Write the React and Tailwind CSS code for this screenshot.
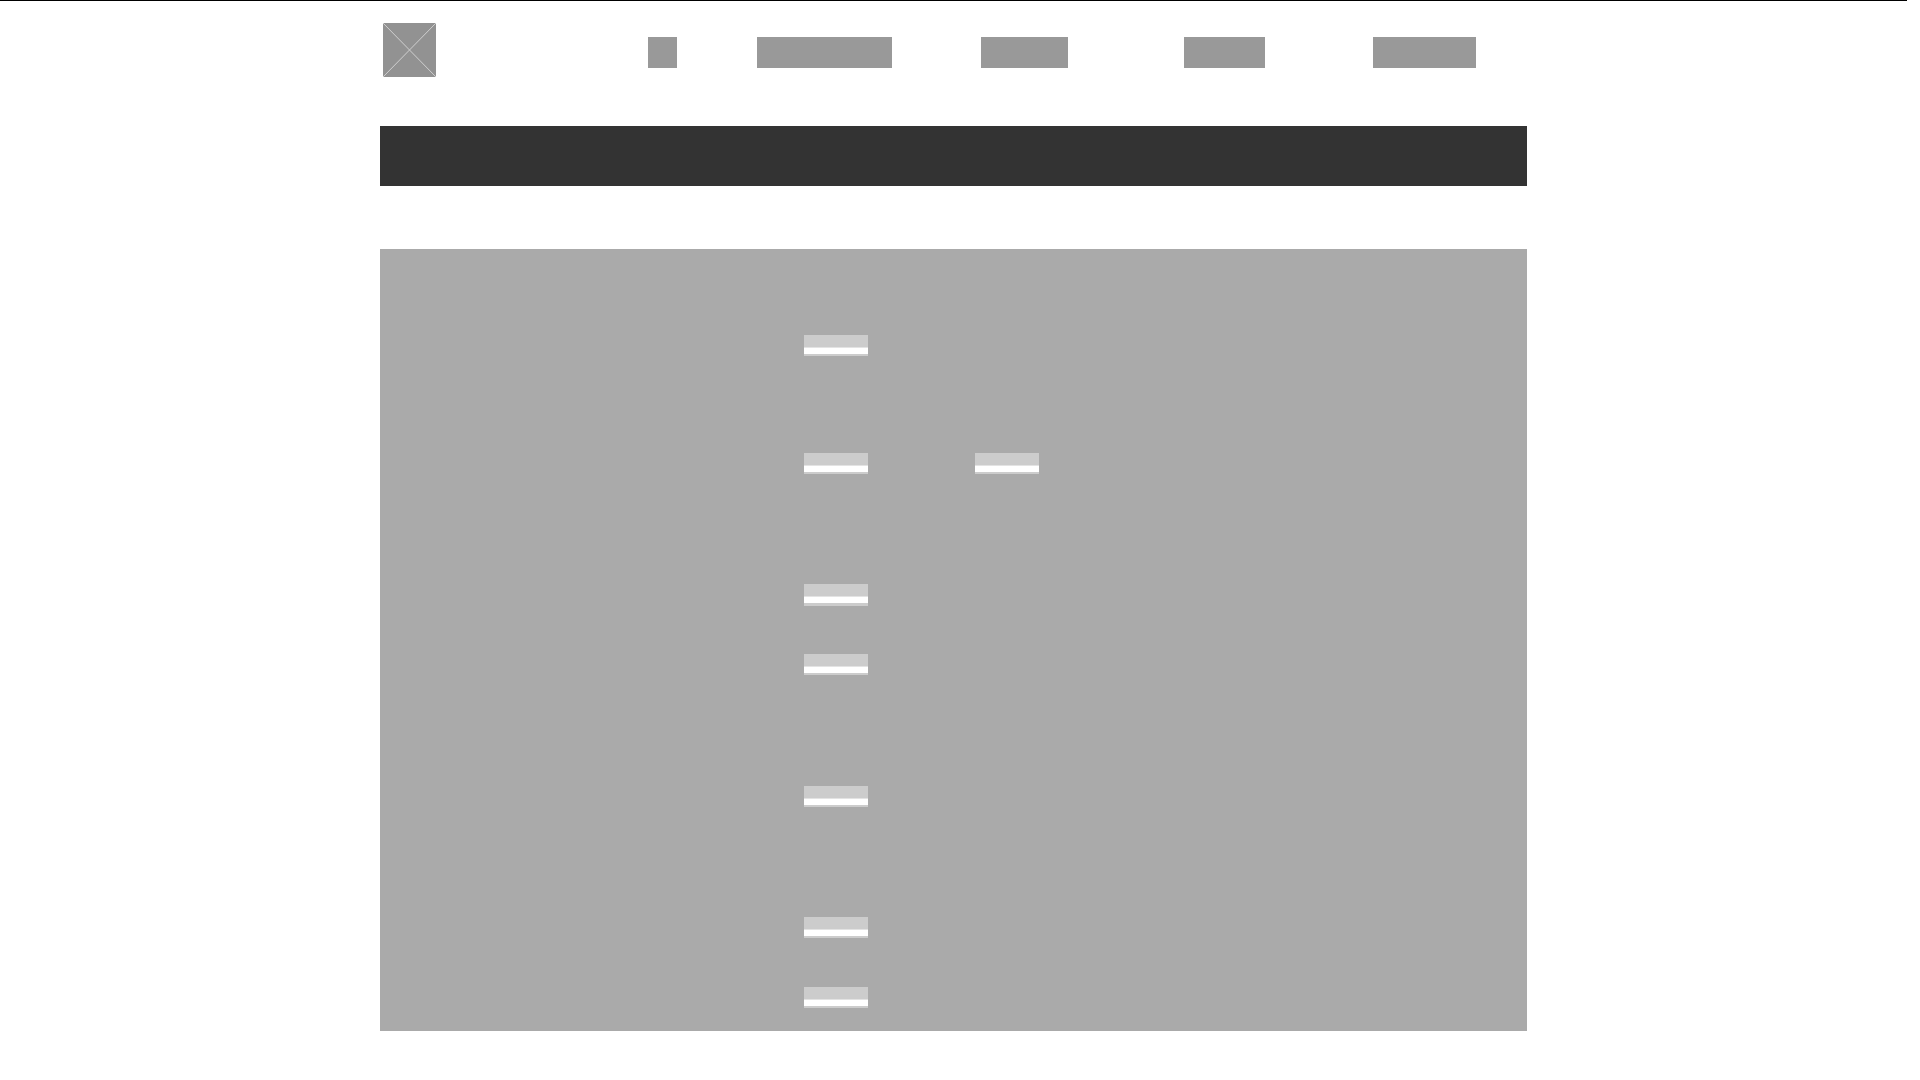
const navItems = [
  { label: "Home", size: "w-[29px]" },
  { label: "Section one", size: "ml-20 w-[135px]" },
  { label: "Section two", size: "ml-[89px] w-[87px]" },
  { label: "Section three", size: "ml-[116px] w-[81px]" },
  { label: "Section four", size: "ml-[108px] w-[103px]" },
];

const rows = [
  { space: "", fields: ["Field 1"] },
  { space: "mt-[97px]", fields: ["Field 2", "Field 3"] },
  { space: "mt-[110px]", fields: ["Field 4"], tall: true },
  { space: "mt-12", fields: ["Field 5"] },
  { space: "mt-[111px]", fields: ["Field 6"] },
  { space: "mt-[110px]", fields: ["Field 7"] },
  { space: "mt-[49px]", fields: ["Field 8"] },
];

function Logo() {
  return (
    <a href="#" aria-label="Logo" className="block">
      <svg width="53" height="54" viewBox="0 0 53 54" className="block">
        <rect width="53" height="54" rx="1" fill="#929292" />
        <path d="M0 0L53 54M53 0L0 54" stroke="#cfcfcf" strokeWidth="1" />
      </svg>
    </a>
  );
}

function Field({ label, tall }) {
  return (
    <label className={`block w-16 bg-[#ccc] pt-3 ${tall ? "pb-[3px]" : "pb-0.5"}`}>
      <input
        type="text"
        aria-label={label}
        className="block h-[7px] w-full border-t border-[#e3e3e3] bg-white p-0 text-[6px] leading-none outline-none"
      />
    </label>
  );
}

export default function App() {
  return (
    <div className="min-h-screen bg-white pr-[13px] font-['Liberation_Sans',sans-serif]">
      <div className="border-t border-black">
        <div className="mx-auto w-full max-w-[1147px]">
          <header className="flex items-start justify-between pt-[22px] pr-[51px] pl-[3px]">
            <Logo />
            <nav className="flex pt-3.5" aria-label="Main">
              {navItems.map((item) => (
                <a
                  key={item.label}
                  href="#"
                  aria-label={item.label}
                  className={`block h-[31px] bg-[#999] ${item.size}`}
                />
              ))}
            </nav>
          </header>
          <div className="mt-[49px] h-[60px] bg-[#333]" />
          <main className="mt-[63px] bg-[#aaa] pt-[86px] pb-[23px] pl-[424px]">
            <form>
              {rows.map((row) => (
                <div key={row.fields[0]} className={`flex gap-[107px] ${row.space}`}>
                  {row.fields.map((label) => (
                    <Field key={label} label={label} tall={row.tall} />
                  ))}
                </div>
              ))}
            </form>
          </main>
        </div>
      </div>
    </div>
  );
}
